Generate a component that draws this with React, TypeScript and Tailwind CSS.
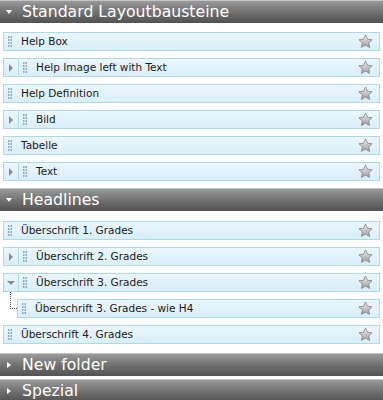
import React from "react";

type Item = {
  label: string;
  expander?: "open" | "closed";
  child?: boolean;
};

const sections: { title: string; open: boolean; pad: string; items: Item[] }[] = [
  {
    title: "Standard Layoutbausteine",
    open: true,
    pad: "pt-[9px] pb-[4px]",
    items: [
      { label: "Help Box" },
      { label: "Help Image left with Text", expander: "closed" },
      { label: "Help Definition" },
      { label: "Bild", expander: "closed" },
      { label: "Tabelle" },
      { label: "Text", expander: "closed" },
    ],
  },
  {
    title: "Headlines",
    open: true,
    pad: "pt-[10px] pb-[6px]",
    items: [
      { label: "Überschrift 1. Grades" },
      { label: "Überschrift 2. Grades", expander: "closed" },
      { label: "Überschrift 3. Grades", expander: "open" },
      { label: "Überschrift 3. Grades - wie H4", child: true },
      { label: "Überschrift 4. Grades" },
    ],
  },
  { title: "New folder", open: false, pad: "", items: [] },
  { title: "Spezial", open: false, pad: "", items: [] },
];

function Grip() {
  return (
    <svg width="4" height="12" viewBox="0 0 4 12" className="shrink-0">
      {[0, 3, 6, 9].map((y) => (
        <g key={y}>
          <rect x="0" y={y} width="1.5" height="2" fill="#8ea9d6" />
          <rect x="2.5" y={y} width="1.5" height="2" fill="#8ea9d6" />
        </g>
      ))}
    </svg>
  );
}

function Star() {
  return (
    <svg width="15" height="15" viewBox="0 0 24 24" className="shrink-0">
      <defs>
        <linearGradient id="sg" x1="0" y1="0" x2="0" y2="1">
          <stop offset="0" stopColor="#f2f2f2" />
          <stop offset="1" stopColor="#9a9a9a" />
        </linearGradient>
      </defs>
      <path
        d="M12 1.5l3.2 6.9 7.3.8-5.4 5 1.5 7.3L12 17.8l-6.6 3.7 1.5-7.3-5.4-5 7.3-.8z"
        fill="url(#sg)"
        stroke="#8a8a8a"
        strokeWidth="1.4"
        strokeLinejoin="round"
      />
    </svg>
  );
}

function Row({ item }: { item: Item }) {
  const box =
    "border border-[#acd9ee] bg-gradient-to-b from-[#ebf7fd] to-[#d9effa]";
  if (item.child) {
    return (
      <div className="relative ml-[17px] mr-[3px] h-[19px]">
        <div className="absolute left-[-7px] top-[-7px] h-[17px] w-[7px] border-l border-b border-dotted border-[#555]" />
        <div className={`${box} flex h-full items-center pl-[4px] pr-[6px]`}>
          <Grip />
          <span className="ml-[9px] flex-1">{item.label}</span>
          <Star />
        </div>
      </div>
    );
  }
  if (item.expander) {
    return (
      <div className="mx-[3px] flex h-[19px]">
        <div className={`${box} flex w-[15px] items-center justify-center border-r-0`}>
          {item.expander === "closed" ? (
            <span className="h-0 w-0 border-y-[4px] border-l-[4px] border-y-transparent border-l-[#8c8c8c]" />
          ) : (
            <span className="h-0 w-0 border-x-[4px] border-t-[4px] border-x-transparent border-t-[#8c8c8c]" />
          )}
        </div>
        <div className={`${box} flex flex-1 items-center pl-[4px] pr-[6px]`}>
          <Grip />
          <span className="ml-[9px] flex-1">{item.label}</span>
          <Star />
        </div>
      </div>
    );
  }
  return (
    <div className={`${box} mx-[3px] flex h-[19px] items-center pl-[4px] pr-[6px]`}>
      <Grip />
      <span className="ml-[9px] flex-1">{item.label}</span>
      <Star />
    </div>
  );
}

function Header({ title, open }: { title: string; open: boolean }) {
  return (
    <div className="flex h-[23px] items-center border-t border-[#c4c4c4] bg-gradient-to-b from-[#9a9a9a] via-[#727272] to-[#525252] pl-[5px] text-[15.7px] text-white">
      <span className="flex w-[7px] justify-center">
        {open ? (
          <span className="h-0 w-0 border-x-[3.5px] border-t-[4px] border-x-transparent border-t-white" />
        ) : (
          <span className="h-0 w-0 border-y-[3.5px] border-l-[4px] border-y-transparent border-l-white" />
        )}
      </span>
      <span className="pl-[10px]">{title}</span>
    </div>
  );
}

export default function App() {
  return (
    <div
      className="h-[400px] w-[383px] overflow-hidden bg-white text-[10.5px] text-[#1a1a1a]"
      style={{ fontFamily: '"DejaVu Sans", Verdana, sans-serif' }}
    >
      {sections.map((s) => (
        <div key={s.title} className="mb-[3px]">
          <Header title={s.title} open={s.open} />
          {s.open && (
            <div className={`flex flex-col gap-[7px] ${s.pad}`}>
              {s.items.map((it) => (
                <Row key={it.label} item={it} />
              ))}
            </div>
          )}
        </div>
      ))}
    </div>
  );
}
